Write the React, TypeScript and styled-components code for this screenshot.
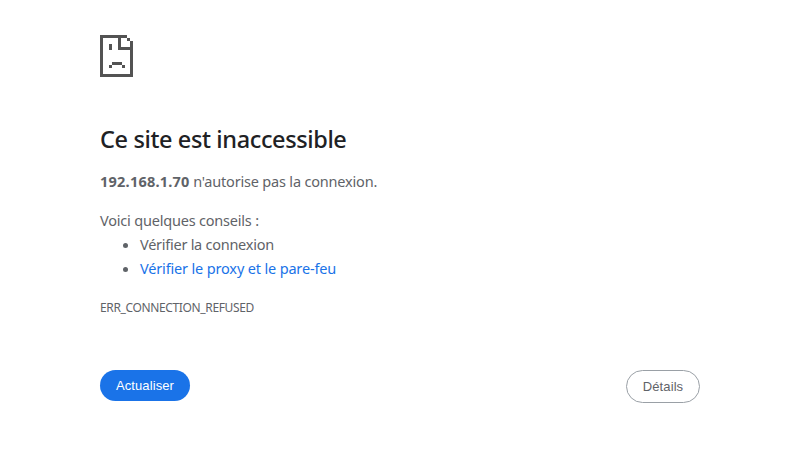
import React from "react";
import styled, { createGlobalStyle } from "styled-components";

const GlobalStyle = createGlobalStyle`
  body {
    margin: 0;
    background: #fff;
    color: #5f6368;
    font-family: "Segoe UI", "Noto Sans", sans-serif;
    font-size: 14.5px;
    line-height: 24px;
  }
`;

const Page = styled.main`
  width: 600px;
  margin: 0 auto 0 100px;
  padding-top: 35px;
`;

const PageIcon = styled.svg`
  display: block;
  width: 33px;
  height: 42px;
  fill: #535353;
`;

const Title = styled.h1`
  margin: 47px 0 0;
  color: #202124;
  font-size: 23.5px;
  font-weight: 500;
  line-height: 30px;
  letter-spacing: -0.38px;
  white-space: nowrap;
`;

const Text = styled.p<{ $spacing: number }>`
  margin: 15px 0 0;
  letter-spacing: ${(p) => p.$spacing}px;
  white-space: nowrap;
`;

const Host = styled.strong`
  letter-spacing: 0.23px;
`;

const Tips = styled.ul`
  margin: 0;
  padding-left: 40px;
`;

const Tip = styled.li<{ $spacing: number }>`
  letter-spacing: ${(p) => p.$spacing}px;
`;

const Link = styled.a`
  color: #1a73e8;
  text-decoration: none;
`;

const ErrorCode = styled.div`
  margin-top: 16px;
  font-size: 12px;
  letter-spacing: -0.36px;
`;

const Actions = styled.div`
  display: flex;
  justify-content: space-between;
  align-items: flex-start;
  margin-top: 50px;
`;

const Button = styled.button<{ $primary?: boolean }>`
  box-sizing: border-box;
  width: ${(p) => (p.$primary ? 90 : 74)}px;
  height: ${(p) => (p.$primary ? 31 : 33)}px;
  padding: 0;
  border: ${(p) => (p.$primary ? "0" : "1px solid #9aa0a6")};
  border-radius: 20px;
  background: ${(p) => (p.$primary ? "#1a73e8" : "#fff")};
  color: ${(p) => (p.$primary ? "#fff" : "#5f6368")};
  font: 500 13px "Liberation Sans", Arial, sans-serif;
  letter-spacing: 0.1px;
  cursor: pointer;
`;

export default function App() {
  return (
    <>
      <GlobalStyle />
      <Page>
        <PageIcon viewBox="0 0 33 42" shapeRendering="crispEdges" aria-hidden="true">
          <path d="M0 0h27v3h-6v9h12v30H0zM3 3v36h27V15H18V3z" fillRule="evenodd" />
          <path d="M27 3h3v3h-3zM30 6h3v9h-3zM9 9h3v6H9zM12 27h10v3H12zM9 30h3v3H9zM22 30h3v3h-3z" />
        </PageIcon>
        <Title>Ce site est inaccessible</Title>
        <Text $spacing={-0.19}>
          <Host>192.168.1.70</Host> n'autorise pas la connexion.
        </Text>
        <Text $spacing={-0.2}>Voici quelques conseils :</Text>
        <Tips>
          <Tip $spacing={-0.26}>Vérifier la connexion</Tip>
          <Tip $spacing={-0.16}>
            <Link href="#">Vérifier le proxy et le pare-feu</Link>
          </Tip>
        </Tips>
        <ErrorCode>ERR_CONNECTION_REFUSED</ErrorCode>
        <Actions>
          <Button $primary>Actualiser</Button>
          <Button>Détails</Button>
        </Actions>
      </Page>
    </>
  );
}
